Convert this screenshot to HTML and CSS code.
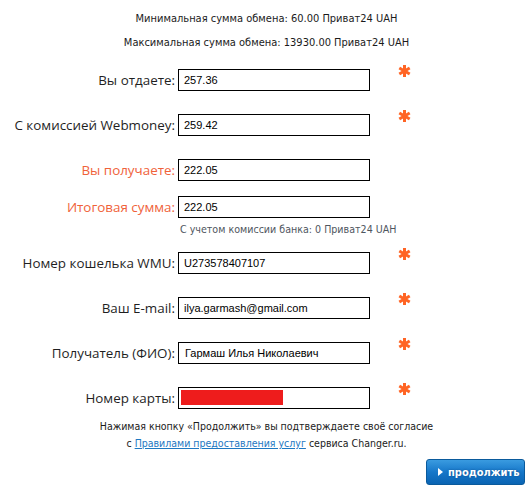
FILE: index.html
```html
<!DOCTYPE html>
<html lang="ru">
<head>
<meta charset="utf-8">
<title>Обмен</title>
<link rel="stylesheet" href="styles.css">
</head>
<body>
<div class="page">
  <div class="limits">
    <p>Минимальная сумма обмена: 60.00 Приват24 UAH</p>
    <p>Максимальная сумма обмена: 13930.00 Приват24 UAH</p>
  </div>
  <form class="form">
    <div class="row">
      <label class="label">Вы отдаете:</label>
      <div class="field">257.36</div>
      <svg class="req" viewBox="0 0 13 12" width="13" height="12"><g stroke="#ff6424" stroke-width="3"><line x1="6.5" y1="0" x2="6.5" y2="12"/><line x1="1.3" y1="3" x2="11.7" y2="9"/><line x1="1.3" y1="9" x2="11.7" y2="3"/></g></svg>
    </div>
    <div class="row">
      <label class="label">С комиссией Webmoney:</label>
      <div class="field">259.42</div>
      <svg class="req" viewBox="0 0 13 12" width="13" height="12"><g stroke="#ff6424" stroke-width="3"><line x1="6.5" y1="0" x2="6.5" y2="12"/><line x1="1.3" y1="3" x2="11.7" y2="9"/><line x1="1.3" y1="9" x2="11.7" y2="3"/></g></svg>
    </div>
    <div class="row row-tight">
      <label class="label label-accent">Вы получаете:</label>
      <div class="field">222.05</div>
    </div>
    <div class="row row-note">
      <label class="label label-accent">Итоговая сумма:</label>
      <div class="field">222.05</div>
      <div class="note">С учетом комиссии банка: 0 Приват24 UAH</div>
    </div>
    <div class="row">
      <label class="label">Номер кошелька WMU:</label>
      <div class="field">U273578407107</div>
      <svg class="req" viewBox="0 0 13 12" width="13" height="12"><g stroke="#ff6424" stroke-width="3"><line x1="6.5" y1="0" x2="6.5" y2="12"/><line x1="1.3" y1="3" x2="11.7" y2="9"/><line x1="1.3" y1="9" x2="11.7" y2="3"/></g></svg>
    </div>
    <div class="row">
      <label class="label">Ваш E-mail:</label>
      <div class="field">ilya.garmash@gmail.com</div>
      <svg class="req" viewBox="0 0 13 12" width="13" height="12"><g stroke="#ff6424" stroke-width="3"><line x1="6.5" y1="0" x2="6.5" y2="12"/><line x1="1.3" y1="3" x2="11.7" y2="9"/><line x1="1.3" y1="9" x2="11.7" y2="3"/></g></svg>
    </div>
    <div class="row">
      <label class="label">Получатель (ФИО):</label>
      <div class="field field-name">Гармаш Илья Николаевич</div>
      <svg class="req" viewBox="0 0 13 12" width="13" height="12"><g stroke="#ff6424" stroke-width="3"><line x1="6.5" y1="0" x2="6.5" y2="12"/><line x1="1.3" y1="3" x2="11.7" y2="9"/><line x1="1.3" y1="9" x2="11.7" y2="3"/></g></svg>
    </div>
    <div class="row row-last">
      <label class="label">Номер карты:</label>
      <div class="field field-card"><span class="redact"></span></div>
      <svg class="req" viewBox="0 0 13 12" width="13" height="12"><g stroke="#ff6424" stroke-width="3"><line x1="6.5" y1="0" x2="6.5" y2="12"/><line x1="1.3" y1="3" x2="11.7" y2="9"/><line x1="1.3" y1="9" x2="11.7" y2="3"/></g></svg>
    </div>
  </form>
  <div class="agree">
    <p>Нажимая кнопку «Продолжить» вы подтверждаете своё согласие</p>
    <p>с <a href="#">Правилами предоставления услуг</a> сервиса Changer.ru.</p>
  </div>
  <div class="actions">
    <button class="btn" type="button"><span class="tri"></span>продолжить</button>
  </div>
</div>
</body>
</html>
```
FILE: styles.css
```css
html, body {
  margin: 0;
  padding: 0;
  background: #fff;
}
body {
  width: 531px;
  height: 489px;
  overflow: hidden;
}
.page {
  box-sizing: border-box;
  width: 531px;
  padding: 7px 6px 0 8px;
  font-family: "DejaVu Sans Condensed", "DejaVu Sans", sans-serif;
  font-size: 11px;
  color: #1b1b1b;
}
.limits p {
  margin: 0;
  line-height: 24px;
  text-align: center;
}
.form {
  margin-top: 14px;
  display: flex;
  flex-direction: column;
}
.row {
  display: grid;
  grid-template-columns: 167px 192px 13px;
  column-gap: 3px;
  margin-bottom: 23px;
}
.row > .req {
  margin-left: 25px;
  margin-top: -4px;
}
.row-tight {
  margin-bottom: 15px;
}
.row-note {
  margin-bottom: 16px;
}
.row-last {
  margin-bottom: 0;
}
.label {
  font-family: "Open Sans", sans-serif;
  font-size: 13.4px;
  line-height: 22px;
  text-align: right;
  color: #1f1f1f;
  white-space: nowrap;
}
.label-accent {
  color: #f0623a;
}
.field {
  box-sizing: border-box;
  height: 22px;
  border: 1px solid #000;
  padding: 0 5px;
  font-family: "Liberation Sans", Arial, sans-serif;
  font-size: 11px;
  line-height: 20px;
  color: #000;
  white-space: nowrap;
  overflow: hidden;
}
.field-name {
  padding-left: 6px;
}
.field-card {
  padding: 2px 2px;
}
.redact {
  display: block;
  width: 102px;
  height: 15px;
  background: #ee1c1c;
}
.note {
  grid-column: 2 / 4;
  margin-top: 4px;
  padding-left: 2px;
  font-size: 10.6px;
  line-height: 14px;
  color: #4f5660;
  white-space: nowrap;
}
.agree {
  margin-top: 9px;
  font-size: 10.5px;
}
.agree p {
  margin: 0;
  line-height: 17px;
  text-align: center;
}
.agree a {
  color: #1e78c2;
  text-decoration: underline;
}
.actions {
  display: flex;
  justify-content: flex-end;
  margin-top: 7px;
}
.btn {
  display: flex;
  align-items: center;
  gap: 5px;
  box-sizing: border-box;
  width: 99px;
  height: 26px;
  padding: 0 0 0 11px;
  border: 1px solid #0a5a9c;
  border-radius: 3px;
  background: linear-gradient(#3a9be0 0%, #1677c9 50%, #0a64b3 100%);
  color: #fff;
  font-family: "DejaVu Sans Condensed", "DejaVu Sans", sans-serif;
  font-weight: bold;
  font-size: 11px;
  white-space: nowrap;
  text-shadow: 0 0 2px rgba(0, 40, 90, 0.5);
  cursor: pointer;
}
.tri {
  flex: none;
  width: 0;
  height: 0;
  border-top: 4px solid transparent;
  border-bottom: 4px solid transparent;
  border-left: 5px solid #fff;
}
```
